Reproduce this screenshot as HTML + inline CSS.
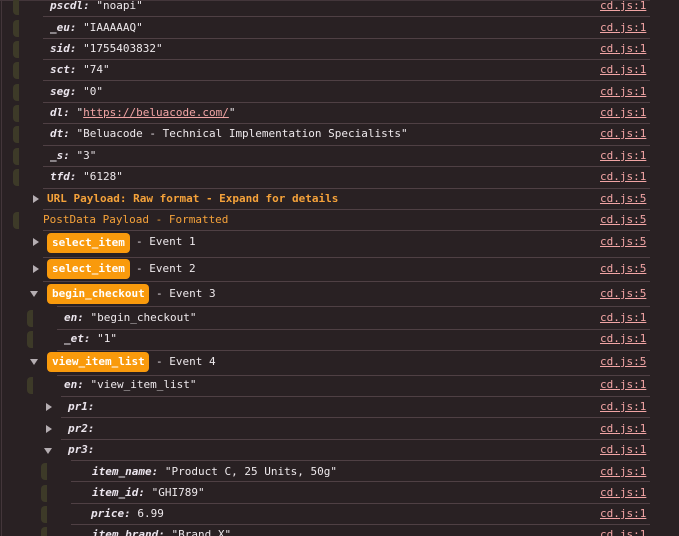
<!DOCTYPE html>
<html><head><style>
html,body{margin:0;padding:0;background:#292123;width:679px;height:536px;overflow:hidden;position:relative;font-family:"DejaVu Sans Mono","Liberation Mono",monospace;font-size:11px;color:#eee9ec}
.r{position:absolute;white-space:pre;line-height:14px}
.k{font-style:italic;font-weight:bold;color:#ece6ee}
.s{position:absolute;height:1px;background:#4f4044;right:29px}
.p{position:absolute;width:6px;height:17px;background:#3d3a28;border-radius:4px 0 0 4px}
.l{position:absolute;left:600px;color:#f2a5a5;text-decoration:underline;line-height:14px}
.o{color:#f5a23a}
.b{position:absolute;height:20px;background:#f99a0c;border-radius:4px;color:#fff;font-weight:bold;line-height:20px;padding:0 0 0 5px;box-sizing:border-box;font-size:11px;white-space:nowrap}
.a{position:absolute;width:0;height:0}
.ar{border-left:6px solid #b5aeb2;border-top:4px solid transparent;border-bottom:4px solid transparent}
.ad{border-top:6px solid #b5aeb2;border-left:4px solid transparent;border-right:4px solid transparent}
</style></head><body>
<div style="position:absolute;left:1px;top:0;width:1px;height:536px;background:#43363a"></div>
<div style="position:absolute;left:0;top:0;width:650px;height:1px;background:#43363a"></div>

<div class="p" style="left:13px;top:-2px"></div><div class="r" style="left:50px;top:-1px"><span class="k">pscdl:</span> "noapi"</div><div class="l" style="top:-1px">cd.js:1</div><div class="s" style="left:43px;top:16px"></div>
<div class="p" style="left:13px;top:20px"></div><div class="r" style="left:50px;top:21px"><span class="k">_eu:</span> "IAAAAAQ"</div><div class="l" style="top:21px">cd.js:1</div><div class="s" style="left:43px;top:38px"></div>
<div class="p" style="left:13px;top:41px"></div><div class="r" style="left:50px;top:42px"><span class="k">sid:</span> "1755403832"</div><div class="l" style="top:42px">cd.js:1</div><div class="s" style="left:43px;top:59px"></div>
<div class="p" style="left:13px;top:62px"></div><div class="r" style="left:50px;top:63px"><span class="k">sct:</span> "74"</div><div class="l" style="top:63px">cd.js:1</div><div class="s" style="left:43px;top:80px"></div>
<div class="p" style="left:13px;top:84px"></div><div class="r" style="left:50px;top:85px"><span class="k">seg:</span> "0"</div><div class="l" style="top:85px">cd.js:1</div><div class="s" style="left:43px;top:102px"></div>
<div class="p" style="left:13px;top:105px"></div><div class="r" style="left:50px;top:106px"><span class="k">dl:</span> "<span style="color:#f2a5a5;text-decoration:underline">https://beluacode.com/</span>"</div><div class="l" style="top:106px">cd.js:1</div><div class="s" style="left:43px;top:123px"></div>
<div class="p" style="left:13px;top:126px"></div><div class="r" style="left:50px;top:127px"><span class="k">dt:</span> "Beluacode - Technical Implementation Specialists"</div><div class="l" style="top:127px">cd.js:1</div><div class="s" style="left:43px;top:145px"></div>
<div class="p" style="left:13px;top:148px"></div><div class="r" style="left:50px;top:149px"><span class="k">_s:</span> "3"</div><div class="l" style="top:149px">cd.js:1</div><div class="s" style="left:43px;top:166px"></div>
<div class="p" style="left:13px;top:169px"></div><div class="r" style="left:50px;top:170px"><span class="k">tfd:</span> "6128"</div><div class="l" style="top:170px">cd.js:1</div><div class="s" style="left:43px;top:188px"></div>

<div class="a ar" style="left:33px;top:195px"></div><div class="r o" style="left:47px;top:192px;font-weight:bold">URL Payload: Raw format - Expand for details</div><div class="l" style="top:192px">cd.js:5</div><div class="s" style="left:43px;top:209px"></div>
<div class="p" style="left:13px;top:212px"></div><div class="r o" style="left:43px;top:213px">PostData Payload - Formatted</div><div class="l" style="top:213px">cd.js:5</div><div class="s" style="left:43px;top:230px"></div>

<div class="a ar" style="left:33px;top:238px"></div><div class="b" style="left:47px;top:233px;width:83px">select_item</div><div class="r" style="left:136px;top:235px">- Event 1</div><div class="l" style="top:235px">cd.js:5</div><div class="s" style="left:43px;top:257px"></div>
<div class="a ar" style="left:33px;top:265px"></div><div class="b" style="left:47px;top:259px;width:83px">select_item</div><div class="r" style="left:136px;top:262px">- Event 2</div><div class="l" style="top:262px">cd.js:5</div><div class="s" style="left:43px;top:281px"></div>
<div class="a ad" style="left:30px;top:291px"></div><div class="b" style="left:47px;top:284px;width:102px">begin_checkout</div><div class="r" style="left:156px;top:287px">- Event 3</div><div class="l" style="top:287px">cd.js:5</div><div class="s" style="left:57px;top:306px"></div>
<div class="p" style="left:27px;top:310px"></div><div class="r" style="left:64px;top:311px"><span class="k">en:</span> "begin_checkout"</div><div class="l" style="top:311px">cd.js:1</div><div class="s" style="left:57px;top:329px"></div>
<div class="p" style="left:27px;top:331px"></div><div class="r" style="left:64px;top:332px"><span class="k">_et:</span> "1"</div><div class="l" style="top:332px">cd.js:1</div><div class="s" style="left:57px;top:350px"></div>
<div class="a ad" style="left:30px;top:359px"></div><div class="b" style="left:47px;top:352px;width:102px">view_item_list</div><div class="r" style="left:156px;top:355px">- Event 4</div><div class="l" style="top:355px">cd.js:5</div><div class="s" style="left:57px;top:375px"></div>
<div class="p" style="left:27px;top:377px"></div><div class="r" style="left:64px;top:378px"><span class="k">en:</span> "view_item_list"</div><div class="l" style="top:378px">cd.js:1</div><div class="s" style="left:61px;top:396px"></div>
<div class="a ar" style="left:46px;top:403px"></div><div class="r" style="left:68px;top:400px"><span class="k">pr1:</span></div><div class="l" style="top:400px">cd.js:1</div><div class="s" style="left:61px;top:417px"></div>
<div class="a ar" style="left:46px;top:425px"></div><div class="r" style="left:68px;top:422px"><span class="k">pr2:</span></div><div class="l" style="top:422px">cd.js:1</div><div class="s" style="left:61px;top:439px"></div>
<div class="a ad" style="left:44px;top:448px"></div><div class="r" style="left:68px;top:443px"><span class="k">pr3:</span></div><div class="l" style="top:443px">cd.js:1</div><div class="s" style="left:71px;top:460px"></div>
<div class="p" style="left:41px;top:463px"></div><div class="r" style="left:92px;top:465px"><span class="k">item_name:</span> "Product C, 25 Units, 50g"</div><div class="l" style="top:465px">cd.js:1</div><div class="s" style="left:71px;top:481px"></div>
<div class="p" style="left:41px;top:485px"></div><div class="r" style="left:92px;top:486px"><span class="k">item_id:</span> "GHI789"</div><div class="l" style="top:486px">cd.js:1</div><div class="s" style="left:71px;top:503px"></div>
<div class="p" style="left:41px;top:506px"></div><div class="r" style="left:91px;top:507px"><span class="k">price:</span> 6.99</div><div class="l" style="top:507px">cd.js:1</div><div class="s" style="left:71px;top:524px"></div>
<div class="p" style="left:41px;top:527px"></div><div class="r" style="left:92px;top:528px"><span class="k">item_brand:</span> "Brand_X"</div><div class="l" style="top:528px">cd.js:1</div>
</body></html>
